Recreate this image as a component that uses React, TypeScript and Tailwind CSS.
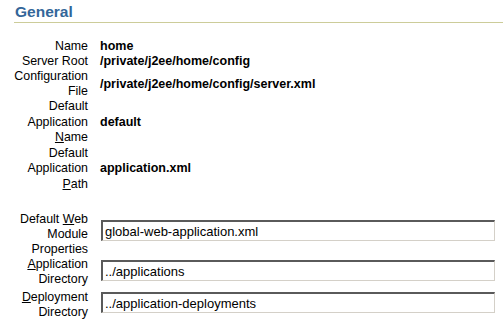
import React from 'react';

const font = "font-['Liberation_Sans',Arial,Helvetica,sans-serif]";

const infoRows: { label: React.ReactNode; value: string; lead: string }[] = [
  { label: 'Name', value: 'home', lead: 'leading-[15px]' },
  { label: 'Server Root', value: '/private/j2ee/home/config', lead: 'leading-[15px]' },
  { label: <>Configuration<br />File</>, value: '/private/j2ee/home/config/server.xml', lead: 'leading-[15px]' },
  { label: <>Default<br />Application<br /><u>N</u>ame</>, value: 'default', lead: 'leading-[15.5px]' },
  { label: <>Default<br />Application<br /><u>P</u>ath</>, value: 'application.xml', lead: 'leading-[15.5px]' },
];

const fieldRows: { label: React.ReactNode; value: string; boxClass: string; rowClass: string }[] = [
  {
    label: <>Default <u>W</u>eb<br />Module<br />Properties</>,
    value: 'global-web-application.xml',
    boxClass: 'mt-[8px]',
    rowClass: '',
  },
  {
    label: <><u>A</u>pplication<br />Directory</>,
    value: '../applications',
    boxClass: 'mt-[3px]',
    rowClass: 'mb-[3px]',
  },
  {
    label: <><u>D</u>eployment<br />Directory</>,
    value: '../application-deployments',
    boxClass: 'mt-[2px]',
    rowClass: '',
  },
];

export default function App() {
  return (
    <div className={`w-[503px] h-[323px] overflow-hidden bg-white text-black ${font} text-[12.4px] pt-[3px]`}>
      {/* Section header */}
      <h1 className="pl-[15px] text-[15.5px] leading-[18px] font-bold text-[#336699]">General</h1>
      <div className="ml-[14px] mt-[1px] h-px bg-[#cccc99]" />

      {/* Read-only properties */}
      <div className="mt-[16px] pl-[14px] grid grid-cols-[74px_1fr] gap-x-[12px] items-center">
        {infoRows.map((row, i) => (
          <React.Fragment key={i}>
            <div className={`text-right ${row.lead}`}>{row.label}</div>
            <div className="font-bold text-[12.5px] leading-[15px]">{row.value}</div>
          </React.Fragment>
        ))}
      </div>

      {/* Editable properties */}
      <div className="mt-[20px] pl-[14px] flex flex-col leading-[15px]">
        {fieldRows.map((row, i) => (
          <div key={i} className={`flex items-start gap-x-[13px] ${row.rowClass}`}>
            <div className="w-[74px] shrink-0 text-right">{row.label}</div>
            <input
              readOnly
              value={row.value}
              className={`w-[394px] h-[21px] ${row.boxClass} ${font} text-[13px] pl-[2px] bg-white text-black outline-none border-t-2 border-l-2 border-t-[#5a5a5a] border-l-[#5a5a5a] border-r border-b border-r-[#d4d0c8] border-b-[#d4d0c8]`}
            />
          </div>
        ))}
      </div>
    </div>
  );
}
